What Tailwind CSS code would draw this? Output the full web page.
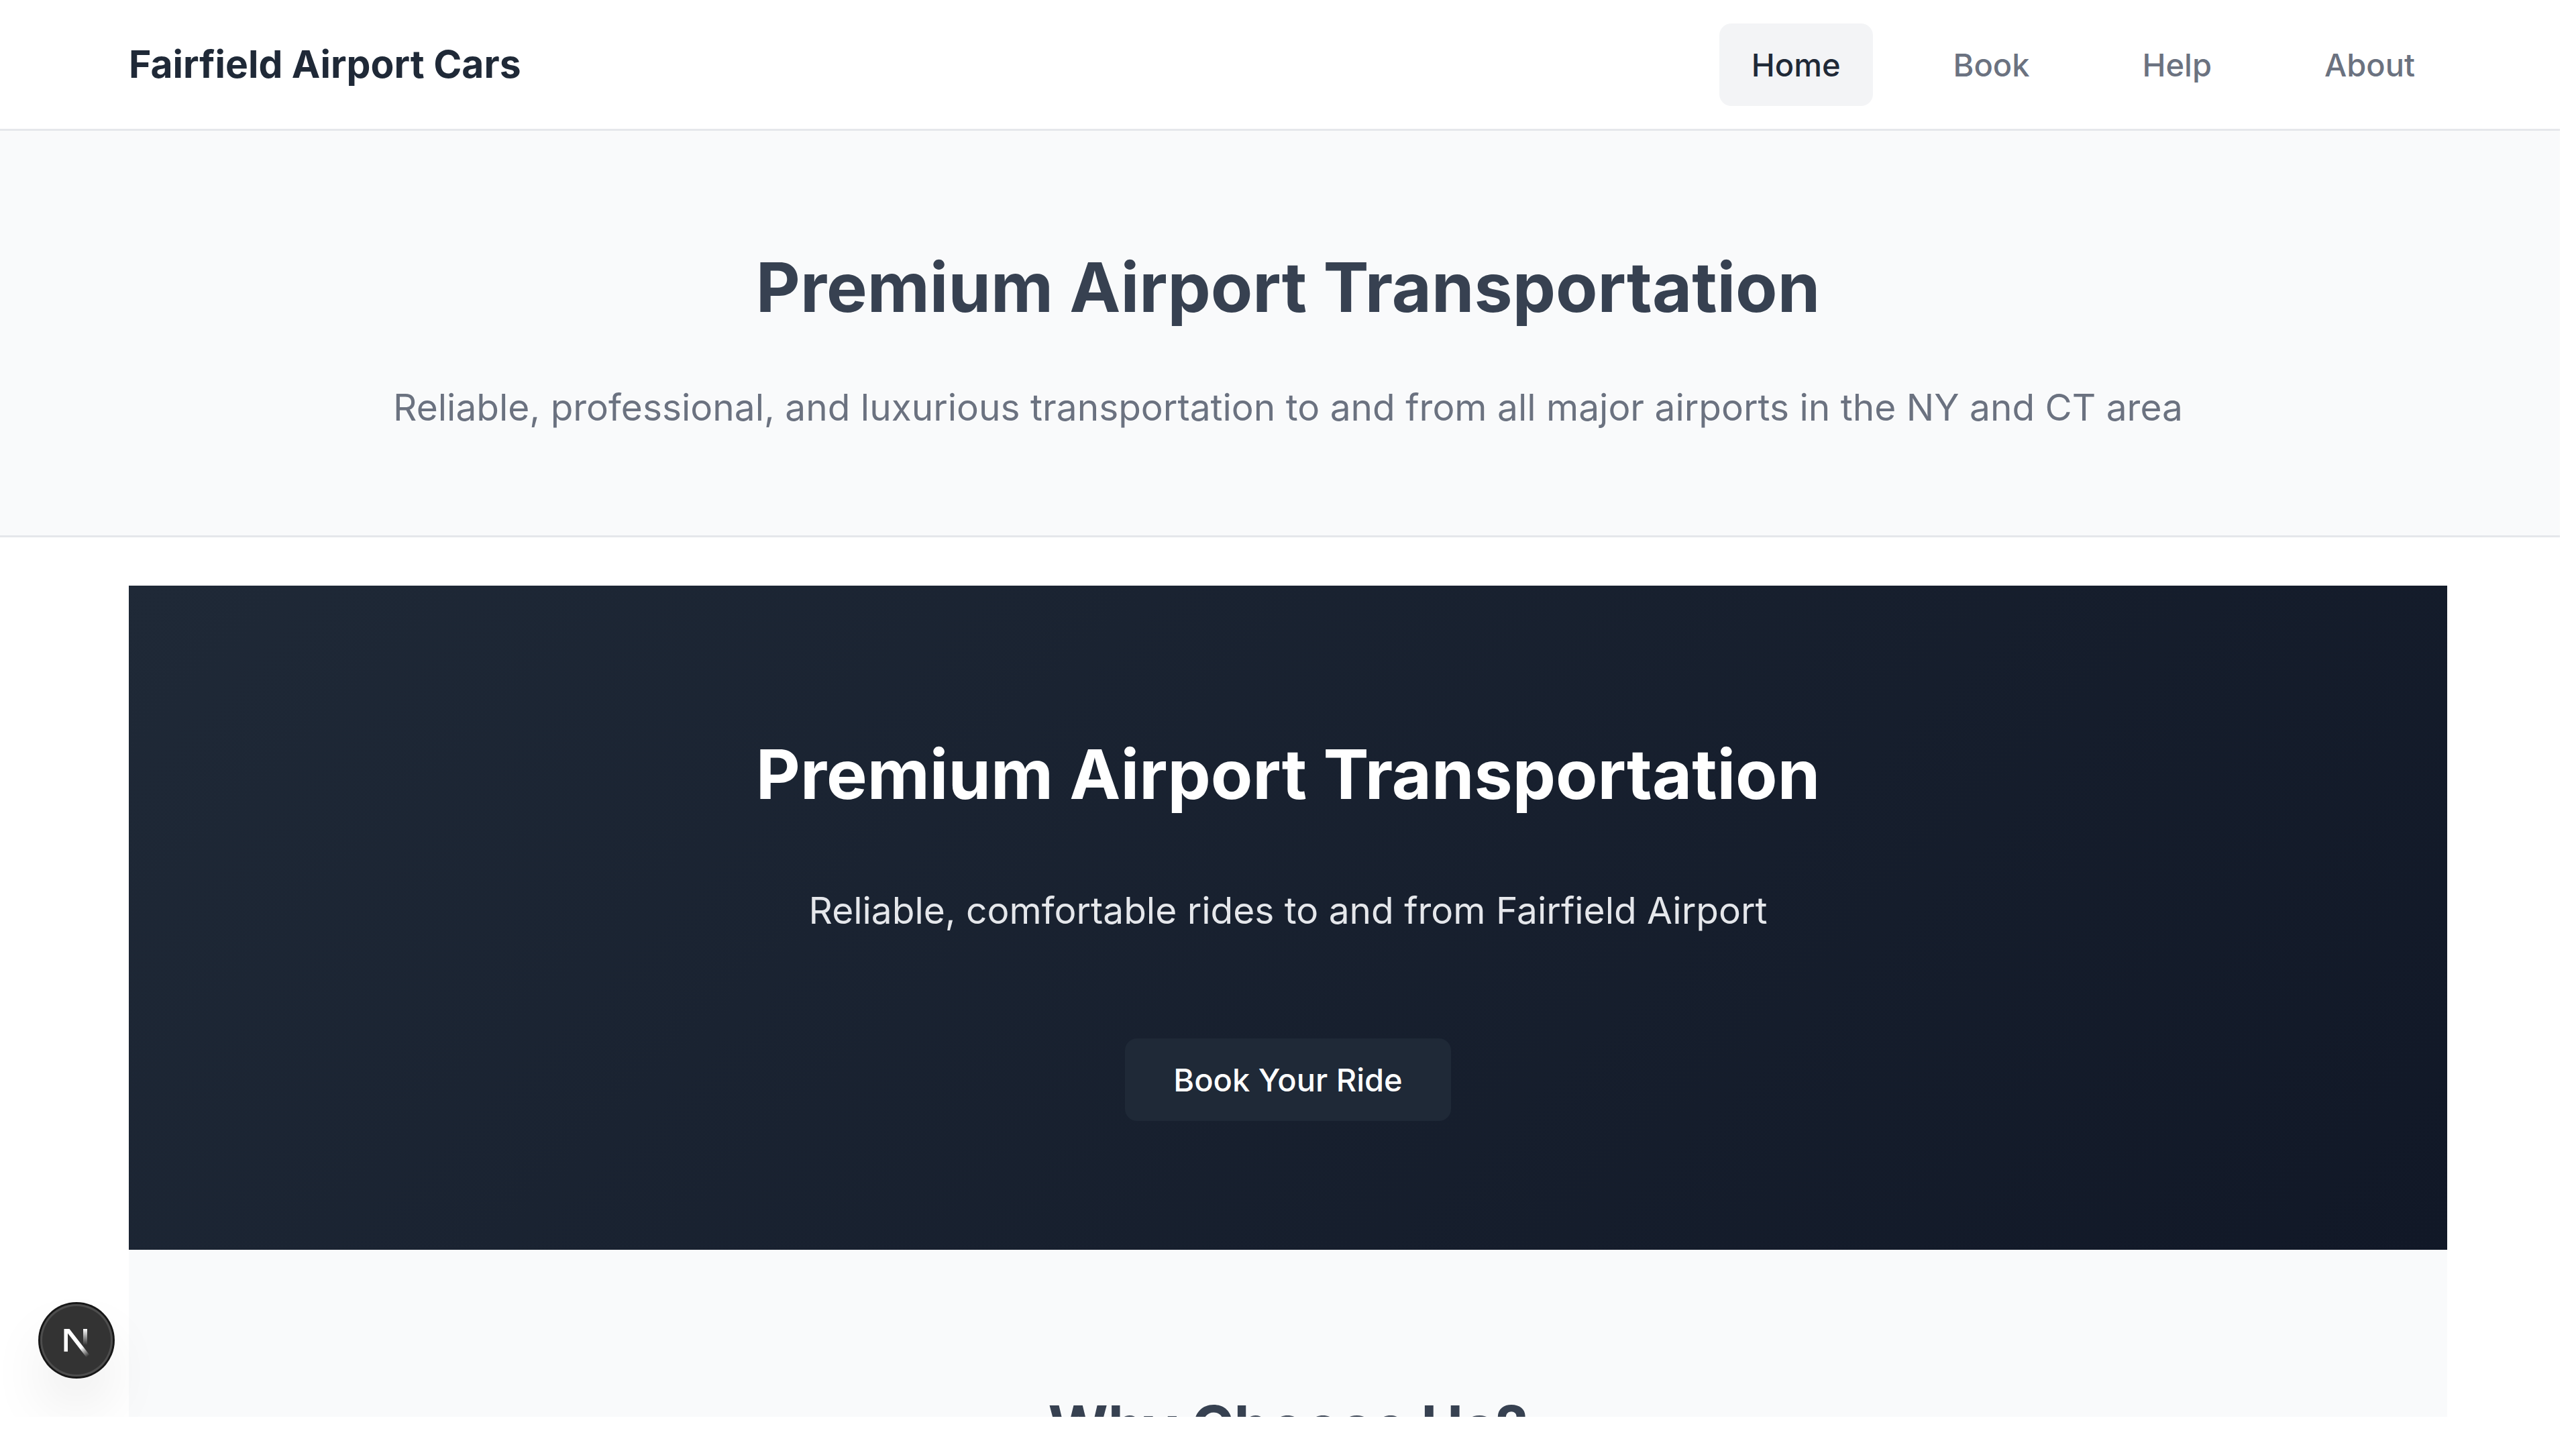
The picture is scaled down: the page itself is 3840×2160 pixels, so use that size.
<!DOCTYPE html>
<html lang="en">
<head>
<meta charset="utf-8">
<meta name="viewport" content="width=device-width, initial-scale=1">
<title>Fairfield Airport Cars</title>
<script src="https://cdn.jsdelivr.net/npm/@tailwindcss/browser@4"></script>
</head>
<body class="min-h-screen bg-white font-['Inter',sans-serif] text-[#1f2937]">
<div class="relative mr-6 h-[calc(100vh-48px)] overflow-hidden">
  <header class="border-b-[3px] border-[#e5e7eb]">
    <div class="flex h-48 items-center justify-between pr-42 pl-48">
      <a href="#" class="text-[57px] leading-[90px] font-bold">Fairfield Airport Cars</a>
      <nav class="flex items-center gap-[72px] text-[47px] leading-[75px] font-medium text-[#6b7280]">
        <a href="#" aria-current="page" class="rounded-[18px] bg-[#f3f4f6] px-12 py-6 text-[#1f2937]">Home</a>
        <a href="#" class="px-12 py-6">Book</a>
        <a href="#" class="px-12 py-6">Help</a>
        <a href="#" class="px-12 py-6">About</a>
      </nav>
    </div>
  </header>
  <section class="border-b-[3px] border-[#e5e7eb] bg-[#f9fafb] py-36 pl-6 text-center">
    <h1 class="text-[102px] leading-[178px] font-bold text-[#374151]">Premium Airport Transportation</h1>
    <p class="mt-11 text-[55px] leading-[93px] text-[#6b7280]">Reliable, professional, and luxurious transportation to and from all major airports in the NY and CT area</p>
  </section>
  <main class="pt-18 pr-42 pl-48">
    <section class="flex flex-col items-center bg-linear-135 from-[#1f2937] to-[#111827] py-48 text-center text-white">
      <h2 class="text-[102px] leading-[178px] font-bold">Premium Airport Transportation</h2>
      <p class="mt-17 text-[55px] leading-[93px] text-[#e5e7eb]">Reliable, comfortable rides to and from Fairfield Airport</p>
      <button type="button" class="mt-36 rounded-[18px] bg-[#1f2937] px-18 py-6 text-[47px] leading-[75px] font-medium">Book Your Ride</button>
    </section>
    <section class="bg-[#f9fafb] pt-48 text-center">
      <h2 class="text-[86px] leading-[144px] font-bold text-[#374151]">Why Choose Us?</h2>
    </section>
  </main>
  <button type="button" aria-label="Open Next.js Dev Tools" class="absolute bottom-[60px] left-[60px] size-27 rounded-full bg-[#333] shadow-[0_0_0_3px_#171717,inset_0_0_0_3px_#4d4d4d,0_48px_96px_-24px_rgb(0_0_0/0.24)]">
    <svg viewBox="0 0 108 108" class="size-27" aria-hidden="true">
      <defs>
        <linearGradient id="diag" gradientUnits="userSpaceOnUse" x1="61" y1="65" x2="71" y2="78">
          <stop stop-color="#fff"/>
          <stop offset="1" stop-color="#fff" stop-opacity="0"/>
        </linearGradient>
        <linearGradient id="stem" gradientUnits="userSpaceOnUse" x1="67" y1="37" x2="67" y2="61">
          <stop stop-color="#fff"/>
          <stop offset="1" stop-color="#fff" stop-opacity="0"/>
        </linearGradient>
      </defs>
      <path fill="url(#diag)" d="M35.5 37H43.5L73.3 75.5L68.7 79.3L41 43.5V70.7H35.5Z"/>
      <path fill="url(#stem)" d="M64 37H70V70H64Z"/>
    </svg>
  </button>
</div>
</body>
</html>
